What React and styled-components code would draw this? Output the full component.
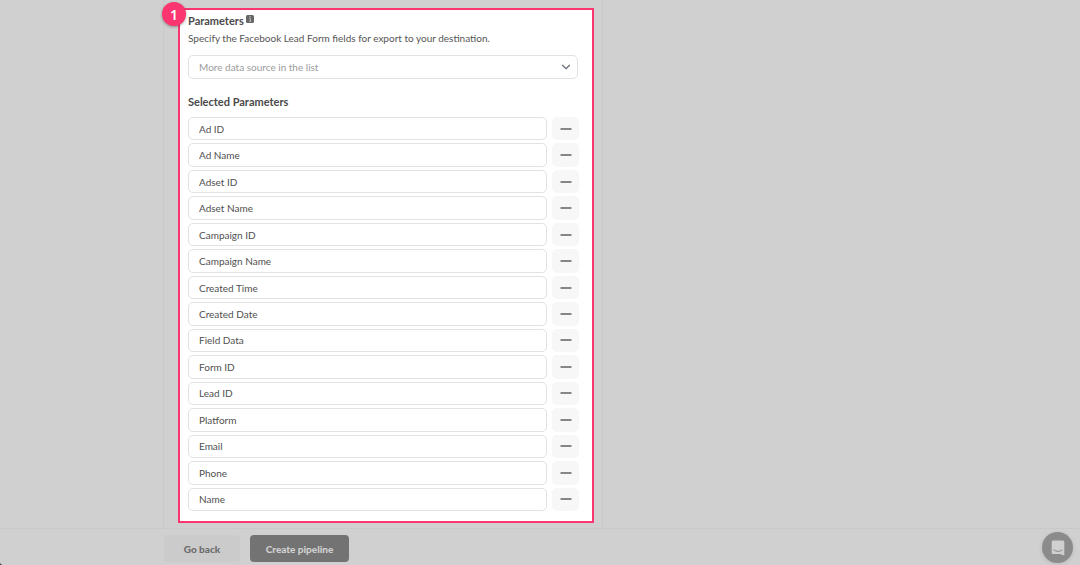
import { useState } from 'react'
import styled, { createGlobalStyle } from 'styled-components'

const GlobalStyle = createGlobalStyle`
   * {
      box-sizing: border-box;
   }
   body {
      margin: 0;
      background: #333;
      color: #4a4a4a;
      font-family: Lato, 'Liberation Sans', sans-serif;
      font-size: 10px;
   }
   button, input, select {
      margin: 0;
      font-family: inherit;
   }
`

const Page = styled.div`
   display: flex;
   flex-direction: column;
   min-height: 100vh;
   background: #d0d0d0;
   border-bottom-left-radius: 3px;
`

const Main = styled.main`
   flex: 1;
   display: flex;
   padding-left: 163px;
`

const Card = styled.section`
   display: flex;
   width: 440px;
   padding: 8px 8px 5px 14px;
   border: solid #cacaca;
   border-width: 0 1px;
`

const Highlight = styled.div`
   position: relative;
   flex: 1;
   display: flex;
   flex-direction: column;
   padding: 4px 14px 10px 8px;
   border: 2px solid #fb3570;
   background: #fff;
`

const Step = styled.span`
   position: absolute;
   top: -8px;
   left: -18px;
   display: flex;
   align-items: center;
   justify-content: center;
   width: 24px;
   height: 24px;
   border-radius: 50%;
   background: #fb3570;
   box-shadow: 0 1px 3px rgba(0, 0, 0, 0.35);
   color: #fff;
   font-family: 'Noto Sans', sans-serif;
   font-size: 14px;
   font-weight: 600;
`

const Title = styled.h2`
   display: flex;
   gap: 2px;
   margin: 0;
   font-size: 11px;
   font-weight: 700;
   line-height: 14px;
`

const Hint = styled.p`
   margin: 3px 0 10px;
   color: #555;
   font-size: 10px;
   line-height: 14px;
`

const SelectBox = styled.div`
   display: grid;
   align-items: center;
   margin-bottom: 16px;
   > * {
      grid-area: 1 / 1;
   }
   svg {
      justify-self: end;
      margin-right: 7px;
      pointer-events: none;
   }
`

const Select = styled.select`
   appearance: none;
   width: 100%;
   height: 24px;
   padding: 0 10px;
   border: 1px solid #e2e2e2;
   border-radius: 5px;
   background: #fff;
   color: #9b9b9b;
   font-size: 10px;
`

const List = styled.ul`
   flex: 1;
   display: grid;
   grid-auto-rows: 1fr;
   gap: 3px;
   margin: 8px -1px 0 0;
   padding: 0;
   list-style: none;
`

const Row = styled.li`
   display: flex;
   gap: 5px;
`

const Field = styled.input`
   flex: 1;
   min-width: 0;
   padding: 0 10px;
   border: 1px solid #e2e2e2;
   border-radius: 5px;
   background: #fff;
   color: #505050;
   font-size: 10px;
`

const Remove = styled.button`
   display: flex;
   align-items: center;
   justify-content: center;
   width: 27px;
   padding: 0;
   border: 0;
   border-radius: 5px;
   background: #f7f7f7;
   cursor: pointer;
`

const Footer = styled.footer`
   display: flex;
   gap: 10px;
   padding: 6px 0 3px 164px;
   border-top: 1px solid #c9c9c9;
`

const Button = styled.button`
   height: 27px;
   padding: 0;
   width: ${(props) => props.$w};
   border: 0;
   border-radius: 4px;
   background: ${(props) => (props.$primary ? '#737373' : '#cbcbcb')};
   color: ${(props) => (props.$primary ? '#d0d0d0' : '#6b6b6b')};
   font-size: 10px;
   font-weight: 900;
   cursor: pointer;
`

const Chat = styled.button`
   position: fixed;
   right: 7px;
   bottom: 2px;
   display: flex;
   align-items: center;
   justify-content: center;
   width: 31px;
   height: 31px;
   padding: 0;
   border: 0;
   border-radius: 50%;
   background: #8b8b8b;
   box-shadow: 0 1px 4px rgba(0, 0, 0, 0.12);
   cursor: pointer;
`

const InfoIcon = () => (
   <svg width="8" height="9" viewBox="0 0 8 9" aria-hidden="true">
      <rect y="1" width="8" height="8" rx="1.5" fill="#666" />
      <path d="M3.2 4.4h1.2v2.8M3 7.2h2.2" fill="none" stroke="#ddd" strokeWidth=".7" />
      <rect x="3.5" y="2.2" width="1.1" height="1.1" fill="#ddd" />
   </svg>
)

const Chevron = () => (
   <svg width="10" height="6" viewBox="0 0 10 6" aria-hidden="true">
      <path d="M1.2 1 5 4.7 8.8 1" fill="none" stroke="#626976" strokeWidth="1.2" />
   </svg>
)

const Minus = () => (
   <svg width="12" height="2" viewBox="0 0 12 2" aria-hidden="true">
      <path d="M.5 1h11" stroke="#555" strokeWidth="1.4" />
   </svg>
)

const ChatIcon = () => (
   <svg width="14" height="16" viewBox="0 0 14 16" aria-hidden="true">
      <path d="M2 .5h10Q13.3.5 13.3 2v13.5L9 14H2Q.7 14 .7 12.5V2Q.7.5 2 .5z" fill="#d0d0d0" />
      <path d="M2.8 10q4.2 3 8.4 0" fill="none" stroke="#8b8b8b" strokeLinecap="round" />
   </svg>
)

const initial = [
   'Ad ID',
   'Ad Name',
   'Adset ID',
   'Adset Name',
   'Campaign ID',
   'Campaign Name',
   'Created Time',
   'Created Date',
   'Field Data',
   'Form ID',
   'Lead ID',
   'Platform',
   'Email',
   'Phone',
   'Name',
]

export default function App() {
   const [selected, setSelected] = useState(initial)

   return (
      <>
         <GlobalStyle />
         <Page>
            <Main>
               <Card>
                  <Highlight>
                     <Step>1</Step>
                     <Title>
                        <label htmlFor="source">Parameters</label>
                        <InfoIcon />
                     </Title>
                     <Hint>Specify the Facebook Lead Form fields for export to your destination.</Hint>
                     <SelectBox>
                        <Select id="source">
                           <option>More data source in the list</option>
                        </Select>
                        <Chevron />
                     </SelectBox>
                     <Title>Selected Parameters</Title>
                     <List>
                        {selected.map((name) => (
                           <Row key={name}>
                              <Field aria-label={name} value={name} readOnly />
                              <Remove
                                 aria-label={`Remove ${name}`}
                                 onClick={() => setSelected(selected.filter((n) => n !== name))}
                              >
                                 <Minus />
                              </Remove>
                           </Row>
                        ))}
                     </List>
                  </Highlight>
               </Card>
            </Main>
            <Footer>
               <Button $w="76px">Go back</Button>
               <Button $w="99px" $primary>
                  Create pipeline
               </Button>
            </Footer>
            <Chat aria-label="Open chat">
               <ChatIcon />
            </Chat>
         </Page>
      </>
   )
}
